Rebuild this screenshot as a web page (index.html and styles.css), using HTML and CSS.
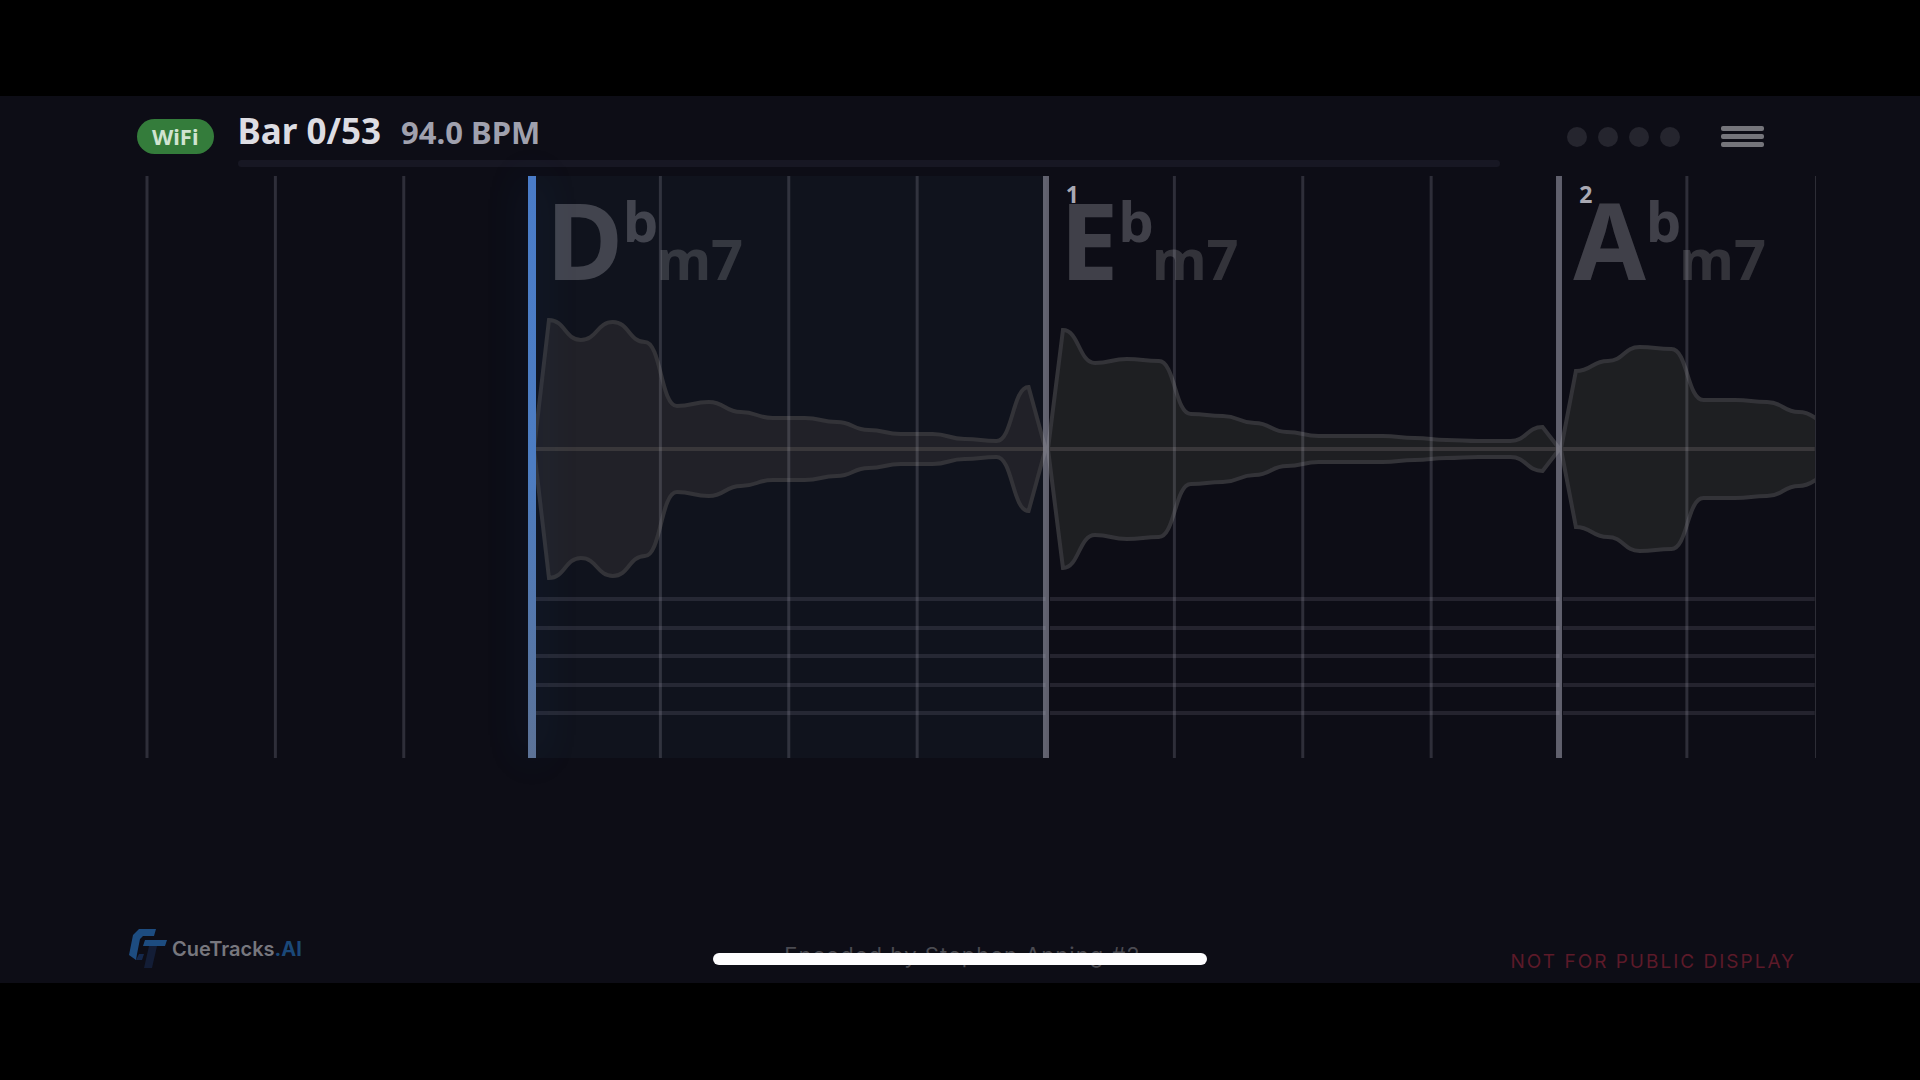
FILE: index.html
```html
<!DOCTYPE html>
<html lang="en">
<head>
    <meta charset="UTF-8">
    <meta name="viewport" content="width=device-width, initial-scale=1.0">
    <title>CueTracks.AI</title>
    <link rel="stylesheet" href="styles.css">
</head>
<body>
    <div class="app">
        <header class="header">
            <span class="wifi">WiFi</span>
            <div class="info">
                <div class="info-text">
                    <h1 class="bar-count">Bar 0/53</h1>
                    <span class="bpm">94.0 BPM</span>
                </div>
                <div class="progress"></div>
            </div>
            <div class="beats">
                <span class="beat"></span>
                <span class="beat"></span>
                <span class="beat"></span>
                <span class="beat"></span>
            </div>
            <button class="menu" type="button" aria-label="Menu">
                <span></span>
                <span></span>
                <span></span>
            </button>
        </header>

        <main class="timeline">
            <section class="bar count-in">
                <svg class="bar-grid" viewBox="0 0 385 582" preserveAspectRatio="none" data-beats="3"></svg>
            </section>
            <section class="bar current">
                <svg class="bar-grid" viewBox="0 0 514 582" preserveAspectRatio="none" data-beats="4" data-peaks="129,109,127,107,43,47,37,31,31,27,19,15,15,10,8,62"></svg>
                <div class="chord">D<span class="accidental">b</span><span class="quality">m7</span></div>
                <div class="playhead"></div>
            </section>
            <section class="bar">
                <svg class="bar-grid" viewBox="0 0 514 582" preserveAspectRatio="none" data-beats="4" data-peaks="119,86,90,88,35,33,26,17,13,13,13,11,9,8,8,22"></svg>
                <span class="bar-number">1</span>
                <div class="chord">E<span class="accidental">b</span><span class="quality">m7</span></div>
            </section>
            <section class="bar last">
                <svg class="bar-grid" viewBox="0 0 257 582" preserveAspectRatio="none" data-beats="2" data-peaks="78,88,102,100,49,49,47,37,26"></svg>
                <span class="bar-number">2</span>
                <div class="chord">A<span class="accidental">b</span><span class="quality">m7</span></div>
            </section>
        </main>

        <footer class="footer">
            <div class="brand">
                <svg class="brand-icon" viewBox="0 0 38 40" aria-hidden="true">
                    <path fill="#1d4c80" d="M10 0h17l-2 7H14l-3 3-3 15-1 6-7-5 4-20z"/>
                    <path fill="#1d4c80" d="M16 11h22l-2 6H14z"/>
                    <path fill="#14284c" d="M7 31l3-6h5l-2 6z"/>
                    <path fill="#131d36" d="M20 17h8l-5 22h-8z"/>
                </svg>
                <span class="brand-name">CueTracks<b>.AI</b></span>
            </div>
            <p class="credit">Encoded by Stephen Anning #2</p>
            <p class="notice">NOT FOR PUBLIC DISPLAY</p>
        </footer>
        <div class="home-indicator"></div>
    </div>

    <script>
        const SVG_NS = 'http://www.w3.org/2000/svg';
        const MID = 273;
        const STAFF = [423, 452, 480, 509, 537];

        function add(svg, tag, cls, attrs) {
            const el = document.createElementNS(SVG_NS, tag);
            el.setAttribute('class', cls);
            for (const key in attrs) el.setAttribute(key, attrs[key]);
            svg.appendChild(el);
        }

        // One side of the waveform, sign is -1 for top and 1 for bottom
        function envelope(peaks, width, sign) {
            const y = (peak) => MID + sign * peak;
            let d = `M2 ${MID} L17 ${y(peaks[0])}`;
            for (let i = 1; i < peaks.length; i++) {
                const x = 17 + i * 32;
                d += ` C${x - 16} ${y(peaks[i - 1])} ${x - 16} ${y(peaks[i])} ${x} ${y(peaks[i])}`;
            }
            return peaks.length === 16 ? d + ` L${width} ${MID}` : d;
        }

        document.querySelectorAll('.bar-grid').forEach((svg) => {
            const width = svg.viewBox.baseVal.width;
            const beats = Number(svg.dataset.beats);

            if (svg.dataset.peaks) {
                const peaks = svg.dataset.peaks.split(',').map(Number);
                [-1, 1].forEach((sign) => {
                    const d = envelope(peaks, width, sign);
                    add(svg, 'path', 'wave-fill', { d: d + ` V${MID} Z` });
                    add(svg, 'path', 'wave-line', { d });
                });
                add(svg, 'line', 'wave-mid', { x1: 4, x2: width, y1: MID, y2: MID });
                STAFF.forEach((y) => add(svg, 'line', 'staff', { x1: 4, x2: width, y1: y, y2: y }));
            }

            for (let i = 0; i < beats; i++) {
                const x = width / beats * i;
                const cls = i === 0 && svg.dataset.peaks ? 'bar-line' : 'beat-line';
                add(svg, 'line', cls, { x1: x, x2: x, y1: 0, y2: 582 });
            }
        });
    </script>
</body>
</html>
```
FILE: styles.css
```css
* {
    margin: 0;
    padding: 0;
    box-sizing: border-box;
}

body {
    background: #000;
    color: #dddde3;
    font-family: "Noto Sans", "Open Sans", sans-serif;
    display: flex;
    flex-direction: column;
    min-height: 100vh;
    padding: 96px 0 97px;
}

.app {
    flex: 1;
    display: flex;
    flex-direction: column;
    position: relative;
    background: #0d0d16;
}

/* Header */
.header {
    display: flex;
    align-items: flex-start;
    height: 80px;
    padding: 0 156px 0 137px;
}

.wifi {
    margin-top: 23px;
    padding: 0 15px;
    border-radius: 18px;
    background: #347c3b;
    color: #d0e4d0;
    font-size: 22px;
    font-weight: 700;
    line-height: 35px;
}

.info {
    flex: 1;
    margin: 11px 67px 0 24px;
}

.info-text {
    display: flex;
    align-items: baseline;
    gap: 20px;
    line-height: 48px;
    height: 53px;
}

.bar-count {
    font-size: 35px;
    font-weight: 700;
}

.bpm {
    font-size: 31px;
    font-weight: 700;
    color: #a0a1ae;
}

.progress {
    height: 7px;
    border-radius: 4px;
    background: #171723;
}

.beats {
    display: flex;
    gap: 11px;
    margin-top: 31px;
}

.beat {
    width: 20px;
    height: 20px;
    border-radius: 50%;
    background: #25252e;
}

.menu {
    display: flex;
    flex-direction: column;
    gap: 3px;
    width: 43px;
    margin: 30px 0 0 41px;
    border: none;
    background: none;
    cursor: pointer;
}

.menu span {
    height: 5px;
    border-radius: 2px;
    background: #75757b;
}

/* Timeline */
.timeline {
    display: grid;
    grid-template-columns: 3fr 4fr 4fr 2fr;
    min-height: 582px;
    margin: 0 104px 0 147px;
}

.bar {
    position: relative;
    min-width: 0;
}

.bar.current {
    background: #10131d;
}

.bar.last {
    border-right: 1px solid #2d2d36;
}

.bar-grid {
    position: absolute;
    inset: 0;
    width: 100%;
    height: 100%;
    overflow: visible;
}

.last .bar-grid {
    clip-path: inset(0 0 0 -4px);
}

.wave-fill {
    fill: #1e1f22;
}

.current .wave-fill {
    fill: #212128;
}

.wave-line {
    fill: none;
    stroke: #333338;
    stroke-width: 4;
}

.wave-mid {
    stroke: #39373a;
    stroke-width: 4;
}

.staff {
    stroke: rgba(190, 185, 205, 0.13);
    stroke-width: 4;
}

.beat-line {
    stroke: rgba(200, 200, 215, 0.18);
    stroke-width: 3;
}

.bar-line {
    stroke: rgba(180, 180, 195, 0.5);
    stroke-width: 6;
}

.bar-number {
    position: absolute;
    top: 2px;
    left: 20px;
    font-size: 23px;
    font-weight: 700;
    line-height: 32px;
    color: #a9a9b3;
}

.chord {
    position: relative;
    padding-left: 14px;
    font-size: 105px;
    font-weight: 700;
    line-height: 128px;
    white-space: nowrap;
    color: rgba(205, 205, 210, 0.27);
}

.accidental,
.quality {
    display: inline-block;
    font-size: 56px;
    line-height: 56px;
}

.accidental {
    vertical-align: 38px;
}

.quality {
    margin-left: -2px;
    color: rgba(205, 205, 205, 0.2);
}

.playhead {
    position: absolute;
    top: 0;
    bottom: 0;
    left: -4px;
    width: 8px;
    background: linear-gradient(#4a7cc8 0%, #4d7dc2 50%, #5c7296 100%);
    box-shadow: 0 0 40px rgba(40, 120, 190, 0.22);
}

/* Footer */
.footer {
    display: grid;
    grid-template-columns: 1fr auto 1fr;
    align-items: end;
    margin-top: auto;
    padding: 0 124px 8px 129px;
    font-family: Inter, "Open Sans", sans-serif;
}

.brand {
    display: flex;
    align-items: center;
    gap: 5px;
    padding-bottom: 6px;
}

.brand-icon {
    width: 38px;
    height: 40px;
}

.brand-name {
    font-size: 20px;
    font-weight: 600;
    line-height: 40px;
    color: #77777e;
}

.brand-name b {
    font-weight: 700;
    color: #1b4878;
}

.credit {
    padding-bottom: 4px;
    font-size: 22px;
    line-height: 32px;
    letter-spacing: 1px;
    color: #4a4a51;
}

.notice {
    justify-self: end;
    font-size: 19px;
    line-height: 26px;
    letter-spacing: 2px;
    color: #5c1a29;
}

.home-indicator {
    position: absolute;
    left: 50%;
    bottom: 18px;
    width: 494px;
    height: 12px;
    border-radius: 6px;
    background: #fdfcfe;
    transform: translateX(-50%);
}
```
